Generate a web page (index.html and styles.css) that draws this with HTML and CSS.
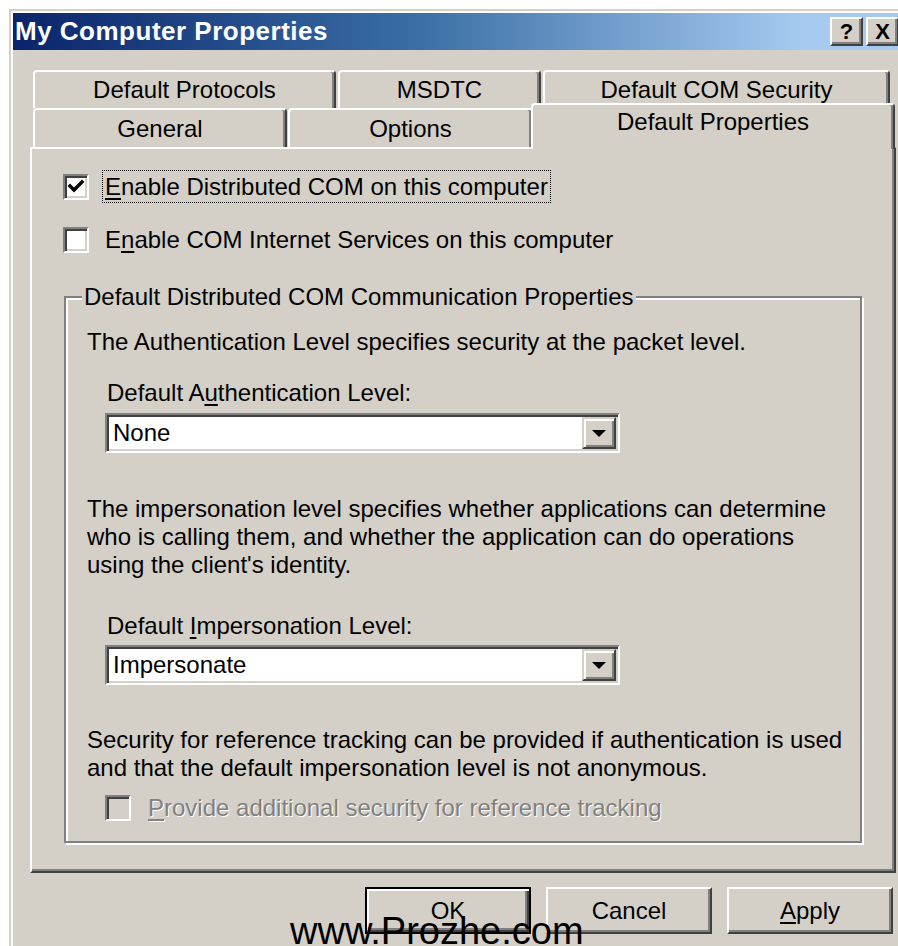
FILE: index.html
```html
<!DOCTYPE html>
<html lang="en">
<head>
<meta charset="utf-8">
<title>My Computer Properties</title>
<link rel="stylesheet" href="styles.css">
</head>
<body>
<div class="window">
  <div class="titlebar">
    <span class="title">My Computer Properties</span>
    <div class="caption-buttons">
      <span class="cap-btn cap-help">?</span>
      <span class="cap-btn cap-close">X</span>
    </div>
  </div>

  <div class="client">
    <div class="tabs">
      <div class="tabrow row-back">
        <div class="tab tab-protocols">Default Protocols</div>
        <div class="tab tab-msdtc">MSDTC</div>
        <div class="tab tab-security">Default COM Security</div>
      </div>
      <div class="tabrow row-front">
        <div class="tab tab-general">General</div>
        <div class="tab tab-options">Options</div>
        <div class="tab tab-active">Default Properties</div>
      </div>
    </div>

    <div class="panel">
      <div class="check-row dcom-row">
        <span class="checkbox">
          <svg class="tick" viewBox="0 0 18 18" width="18" height="18"><path d="M3 8 L7 12 L15 4" /></svg>
        </span>
        <span class="check-label focused"><u>E</u>nable Distributed COM on this computer</span>
      </div>
      <div class="check-row cis-row">
        <span class="checkbox"></span>
        <span class="check-label">E<u>n</u>able COM Internet Services on this computer</span>
      </div>

      <div class="group">
        <div class="group-title">Default Distributed COM Communication Properties</div>
        <p class="note auth-note">The Authentication Level specifies security at the packet level.</p>
        <div class="field-label auth-label">Default A<u>u</u>thentication Level:</div>
        <div class="combo auth-combo">
          <span class="combo-value">None</span>
          <span class="combo-btn"><span class="arrow"></span></span>
        </div>
        <p class="note imp-note">The impersonation level specifies whether applications can determine<br>who is calling them, and whether the application can do operations<br>using the client's identity.</p>
        <div class="field-label imp-label">Default <u>I</u>mpersonation Level:</div>
        <div class="combo imp-combo">
          <span class="combo-value">Impersonate</span>
          <span class="combo-btn"><span class="arrow"></span></span>
        </div>
        <p class="note sec-note">Security for reference tracking can be provided if authentication is used<br>and that the default impersonation level is not anonymous.</p>
        <div class="check-row disabled-row">
          <span class="checkbox disabled"></span>
          <span class="check-label disabled-text"><u>P</u>rovide additional security for reference tracking</span>
        </div>
      </div>
    </div>

    <div class="buttons">
      <span class="btn btn-default">OK</span>
      <span class="btn">Cancel</span>
      <span class="btn"><u>A</u>pply</span>
    </div>
  </div>
</div>
<div class="watermark">www.Prozhe.com</div>
</body>
</html>
```

FILE: styles.css
```css
html, body {
  margin: 0;
  padding: 0;
}

body {
  width: 898px;
  height: 946px;
  overflow: hidden;
  background: #ffffff;
  position: relative;
  font-family: "Liberation Sans", Arial, sans-serif;
  font-size: 24px;
  color: #000;
}

/* window frame */
.window {
  margin: 9px 0 0 9px;
  width: 900px;
  height: 960px;
  box-sizing: border-box;
  background: #d4d0c8;
  border-top: 2px solid #d4d0c8;
  border-left: 2px solid #d4d0c8;
  padding: 2px 0 0 2px;
  box-shadow: inset 2px 2px 0 #ffffff;
}

/* caption */
.titlebar {
  height: 37px;
  display: flex;
  align-items: flex-start;
  background: linear-gradient(to right, #0a246a 0%, #3a6ea5 45%, #a6caf0 88%, #a6caf0 100%);
}

.title {
  color: #fff;
  font-weight: bold;
  font-size: 26px;
  line-height: 37px;
  padding-left: 2px;
  letter-spacing: 0.5px;
}

.caption-buttons {
  margin-left: auto;
  margin-right: 10px;
  margin-top: 4px;
  display: flex;
  gap: 3px;
}

.cap-btn {
  width: 33px;
  height: 29px;
  box-sizing: border-box;
  background: #d4d0c8;
  border-top: 2px solid #ffffff;
  border-left: 2px solid #ffffff;
  border-right: 2px solid #404040;
  border-bottom: 2px solid #404040;
  box-shadow: inset -2px -2px 0 #808080;
  display: flex;
  align-items: center;
  justify-content: center;
  font-weight: bold;
  font-size: 22px;
  line-height: 1;
}

/* client area */
.client {
  padding-left: 17px;
}

.tabs {
  margin-top: 20px;
}

.tabrow {
  display: flex;
  margin-left: 3px;
}

.row-back {
  gap: 2px;
  height: 38px;
}

.row-front {
  height: 39px;
  align-items: flex-start;
}

.tab {
  box-sizing: border-box;
  height: 100%;
  border-top: 2px solid #ffffff;
  border-left: 2px solid #ffffff;
  border-right: 2px solid #404040;
  border-radius: 4px 4px 0 0;
  box-shadow: inset -2px 0 0 #808080;
  display: flex;
  align-items: center;
  justify-content: center;
  background: #d4d0c8;
  white-space: nowrap;
}

.tab-protocols { width: 303px; }
.tab-msdtc { width: 203px; }
.tab-security { width: 347px; }

.tab-general { width: 254px; height: 39px; }
.tab-options { width: 245px; height: 39px; margin-left: 1px; }

.tab-active {
  width: 364px;
  height: 46px;
  margin-top: -5px;
  margin-left: -2px;
  position: relative;
  z-index: 1;
  align-items: flex-start;
  line-height: 34px;
}

/* property page */
.panel {
  box-sizing: border-box;
  width: 866px;
  height: 726px;
  border-top: 2px solid #ffffff;
  border-left: 2px solid #ffffff;
  border-right: 2px solid #404040;
  border-bottom: 2px solid #404040;
  box-shadow: inset -2px -2px 0 #808080;
  padding-top: 1px;
}

.check-row {
  display: flex;
  align-items: center;
  gap: 13px;
}

.dcom-row {
  margin: 20px 0 0 31px;
}

.cis-row {
  margin: 20px 0 0 31px;
}

.checkbox {
  width: 26px;
  height: 26px;
  box-sizing: border-box;
  background: #ffffff;
  border-top: 2px solid #808080;
  border-left: 2px solid #808080;
  border-right: 2px solid #ffffff;
  border-bottom: 2px solid #ffffff;
  box-shadow: inset 2px 2px 0 #404040, inset -2px -2px 0 #d4d0c8;
  display: flex;
  align-items: center;
  justify-content: center;
  flex: none;
}

.checkbox.disabled {
  background: #d4d0c8;
}

.tick {
  display: block;
}

.tick path {
  fill: none;
  stroke: #000;
  stroke-width: 3.4;
  stroke-linecap: square;
  stroke-linejoin: miter;
}

.check-label {
  border: 1px solid transparent;
  padding: 3px 2px;
  line-height: 25px;
  white-space: nowrap;
}

.check-label.focused {
  border: 1px dotted #000;
}

u {
  text-decoration-thickness: 2px;
  text-underline-offset: 3px;
}

/* group box */
.group {
  box-sizing: border-box;
  width: 798px;
  height: 547px;
  margin: 40px 0 0 32px;
  border: 2px solid #808080;
  box-shadow: inset 2px 2px 0 #ffffff, 2px 2px 0 #ffffff;
  padding-top: 0;
}

.group-title {
  width: fit-content;
  margin: -15px 0 0 16px;
  padding: 0 2px;
  line-height: 28px;
  background: #d4d0c8;
  white-space: nowrap;
}

.note {
  margin: 0;
  padding-left: 21px;
  line-height: 28px;
  white-space: nowrap;
}

.auth-note { margin-top: 17px; }
.imp-note { margin-top: 42px; }
.sec-note { margin-top: 41px; }

.field-label {
  margin-left: 41px;
  line-height: 28px;
}

.auth-label { margin-top: 23px; }
.imp-label { margin-top: 33px; }

.combo {
  box-sizing: border-box;
  width: 515px;
  height: 40px;
  margin-left: 39px;
  background: #ffffff;
  border-top: 2px solid #808080;
  border-left: 2px solid #808080;
  border-right: 2px solid #ffffff;
  border-bottom: 2px solid #ffffff;
  box-shadow: inset 2px 2px 0 #404040, inset -2px -2px 0 #d4d0c8;
  display: flex;
  align-items: center;
  padding: 2px;
}

.auth-combo { margin-top: 6px; }
.imp-combo { margin-top: 5px; }

.combo-value {
  flex: 1;
  padding-left: 4px;
  line-height: 32px;
}

.combo-btn {
  width: 34px;
  height: 32px;
  box-sizing: border-box;
  background: #d4d0c8;
  border-top: 2px solid #d4d0c8;
  border-left: 2px solid #d4d0c8;
  border-right: 2px solid #404040;
  border-bottom: 2px solid #404040;
  box-shadow: inset 2px 2px 0 #ffffff, inset -2px -2px 0 #808080;
  display: flex;
  align-items: center;
  justify-content: center;
}

.arrow {
  width: 0;
  height: 0;
  border-left: 7px solid transparent;
  border-right: 7px solid transparent;
  border-top: 7px solid #000;
  margin-top: 1px;
}

.disabled-row {
  margin: 9px 0 0 39px;
  gap: 14px;
}

.disabled-text {
  color: #808080;
  text-shadow: 1px 1px 0 #ffffff;
}

/* dialog buttons */
.buttons {
  display: flex;
  gap: 15px;
  margin-top: 14px;
  padding-left: 335px;
}

.btn {
  box-sizing: border-box;
  width: 166px;
  height: 47px;
  background: #d4d0c8;
  border-top: 2px solid #ffffff;
  border-left: 2px solid #ffffff;
  border-right: 2px solid #404040;
  border-bottom: 2px solid #404040;
  box-shadow: inset -2px -2px 0 #808080;
  display: flex;
  align-items: center;
  justify-content: center;
}

.btn-default {
  border: 2px solid #000;
  box-shadow: inset 2px 2px 0 #ffffff, inset -2px -2px 0 #404040, inset -4px -4px 0 #808080;
}

/* site stamp across the bottom */
.watermark {
  position: absolute;
  left: 290px;
  top: 911px;
  font-family: "Liberation Sans", Arial, sans-serif;
  font-size: 38px;
  line-height: 40px;
  color: #000;
  white-space: nowrap;
}
```
